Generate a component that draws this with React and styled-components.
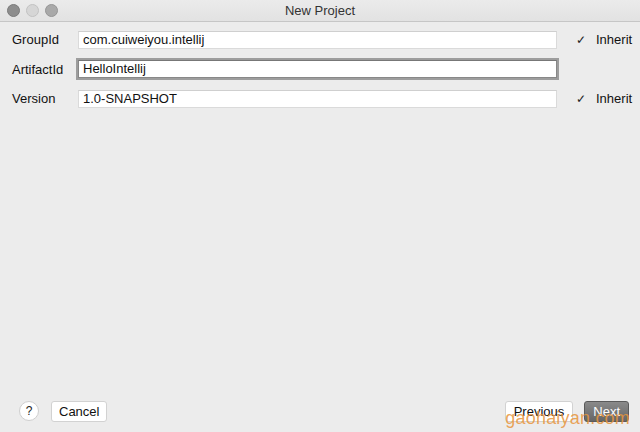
import React from "react";
import styled, { createGlobalStyle } from "styled-components";

const Global = createGlobalStyle`
  html, body { margin: 0; padding: 0; }
  body {
    width: 640px; height: 432px; overflow: hidden;
    background: #ececec;
    font-family: "Liberation Sans", Arial, sans-serif;
    font-size: 13px; color: #111;
  }
  #root { height: 432px; }
`;

const Window = styled.div`
  position: relative;
  width: 640px; height: 432px;
  display: flex; flex-direction: column;
  background: #ececec;
`;

const TitleBar = styled.div`
  position: relative;
  height: 21px;
  display: flex; align-items: center; justify-content: center;
  background: linear-gradient(#ebebeb, #e2e2e2);
  border-bottom: 1px solid #c6c6c6;
  flex: none;
`;

const Lights = styled.div`
  position: absolute; left: 7px; top: 4px;
  display: flex; gap: 6px;
`;

const Light = styled.span`
  width: 11px; height: 11px; border-radius: 50%;
  background: ${p => p.$c};
  border: 1px solid ${p => p.$b};
`;

const Title = styled.div`
  font-size: 13px; color: #333;
`;

const Form = styled.div`
  display: grid;
  grid-template-columns: 66px 480px 1fr;
  grid-auto-rows: 29.5px;
  align-items: center;
  padding: 3px 0 0 12px;
`;

const Label = styled.div`
  font-size: 13px; color: #111;
`;

const Field = styled.div`
  height: 16px;
  line-height: 16px;
  margin-right: 1px;
  padding-left: 4px;
  background: #fff;
  border: 1px solid ${p => (p.$focus ? "#888" : "#dadada")};
  border-top-color: ${p => (p.$focus ? "#777" : "#cfcfcf")};
  box-shadow: ${p => (p.$focus ? "0 0 0 2px #9d9d9d" : "none")};
  font-size: 13px; color: #111;
`;

const Check = styled.div`
  display: flex; align-items: center;
  padding-left: 18px; gap: 10px;
  font-size: 13px; color: #111;
`;

const Mark = styled.span`
  font-size: 12px; color: #222;
`;

const Spacer = styled.div` flex: 1; `;

const Footer = styled.div`
  display: flex; align-items: center;
  padding: 0 11px 11px 19px;
  height: 20px;
`;

const Help = styled.div`
  width: 18px; height: 18px; border-radius: 50%;
  background: #fff; border: 1px solid #cfcfcf;
  display: flex; align-items: center; justify-content: center;
  font-size: 12px; color: #222;
  margin-right: 12px;
`;

const Button = styled.div`
  height: 19px;
  padding: 0 ${p => p.$px || 7}px;
  display: flex; align-items: center;
  border-radius: 3px;
  font-size: 13px;
  background: ${p => (p.$primary ? "linear-gradient(#8a8a8a, #666)" : "#fff")};
  color: ${p => (p.$primary ? "#fff" : "#111")};
  border: 1px solid ${p => (p.$primary ? "#5a5a5a" : "#d2d2d2")};
  margin-left: ${p => p.$ml || 0}px;
`;

const Watermark = styled.div`
  position: absolute; right: 10px; bottom: 3px;
  font-size: 18px; letter-spacing: 0.2px;
  color: rgba(232, 150, 60, 0.85);
  font-family: "Liberation Sans", Arial, sans-serif;
  pointer-events: none;
`;

export default function App() {
  return (
    <>
      <Global />
      <Window>
        <TitleBar>
          <Lights>
            <Light $c="#8d8d8d" $b="#7a7a7a" />
            <Light $c="#d6d6d6" $b="#c2c2c2" />
            <Light $c="#a9a9a9" $b="#959595" />
          </Lights>
          <Title>New Project</Title>
        </TitleBar>
        <Form>
          <Label>GroupId</Label>
          <Field>com.cuiweiyou.intellij</Field>
          <Check><Mark>✓</Mark>Inherit</Check>
          <Label>ArtifactId</Label>
          <Field $focus>HelloIntellij</Field>
          <div />
          <Label>Version</Label>
          <Field>1.0-SNAPSHOT</Field>
          <Check><Mark>✓</Mark>Inherit</Check>
        </Form>
        <Spacer />
        <Footer>
          <Help>?</Help>
          <Button>Cancel</Button>
          <Spacer />
          <Button $px={8}>Previous</Button>
          <Button $primary $px={8} $ml={11}>Next</Button>
        </Footer>
        <Watermark>gaohaiyan.com</Watermark>
      </Window>
    </>
  );
}
